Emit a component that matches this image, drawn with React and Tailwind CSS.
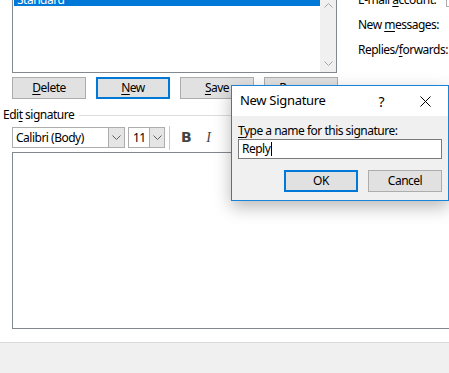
import React from 'react';

const U = ({ children }) => <span className="underline underline-offset-2">{children}</span>;

const Chevron = ({ className = '' }) => (
  <svg width="9" height="6" viewBox="0 0 9 6" className={className}>
    <path d="M0.5 0.5 L4.5 4.5 L8.5 0.5" fill="none" stroke="currentColor" strokeWidth="1" />
  </svg>
);

const WinButton = ({ children, focused }) => (
  <div
    className={
      'w-[74px] h-[22px] flex items-center justify-center bg-[#e1e1e1] ' +
      (focused ? 'border-2 border-[#0078d7]' : 'border border-[#adadad]')
    }
  >
    {children}
  </div>
);

export default function App() {
  return (
    <div
      className="relative w-[449px] h-[373px] overflow-hidden bg-white text-[12px] tracking-[-0.5px] text-black flex flex-col"
      style={{ fontFamily: '"Noto Sans", "Open Sans", sans-serif' }}
    >
      {/* list + account settings */}
      <div className="flex -mt-[14px] h-[87px] shrink-0">
        <div className="ml-[12px] w-[325px] h-[87px] border-x border-b border-[#828790] flex">
          <div className="flex-1 pl-[1px]">
            <div className="h-[20px] overflow-hidden bg-[#0078d7] text-white pl-[3px] leading-[27px]">Standard</div>
          </div>
          <div className="w-[16px] bg-[#f0f0f0] flex flex-col justify-between items-center pt-[16px] pb-[5px] text-[#a6a6a6]">
            <Chevron className="rotate-180" />
            <Chevron />
          </div>
        </div>
        <div className="ml-[21px] flex flex-col pt-[5px] gap-[7px] leading-[18px] flex-1 min-w-0">
          <div className="flex">
            <span className="whitespace-nowrap">E-mail <U>a</U>ccount:</span>
            <div className="ml-auto w-[3px] h-[21px] -mt-[5px] border-l border-b border-[#adadad]" />
          </div>
          <div className="whitespace-nowrap">New <U>m</U>essages:</div>
          <div className="whitespace-nowrap">Replies/<U>f</U>orwards:</div>
        </div>
      </div>

      {/* list buttons */}
      <div className="flex gap-[10px] ml-[12px] mt-[4px] shrink-0">
        <WinButton><span><U>D</U>elete</span></WinButton>
        <WinButton focused><span><U>N</U>ew</span></WinButton>
        <WinButton><span><U>S</U>ave</span></WinButton>
        <WinButton><span><U>R</U>ename</span></WinButton>
      </div>

      {/* edit signature group */}
      <div className="flex items-center ml-[3px] mt-[8px] h-[16px] shrink-0">
        <span className="whitespace-nowrap">Edi<U>t</U> signature</span>
        <div className="flex-1 h-px bg-[#dcdcdc] ml-[5px]" />
      </div>

      {/* toolbar */}
      <div className="flex items-center ml-[12px] mt-[4px] h-[21px] shrink-0">
        <div className="w-[113px] h-[21px] border border-[#adadad] flex">
          <div className="flex-1 pl-[3px] leading-[19px]">Calibri (Body)</div>
          <div className="w-[16px] bg-[#e5e5e5] border-l border-[#adadad] flex items-center justify-center text-[#606060]">
            <Chevron />
          </div>
        </div>
        <div className="ml-[3px] w-[37px] h-[21px] border border-[#adadad] flex">
          <div className="flex-1 pl-[4px] leading-[19px]">11</div>
          <div className="w-[15px] bg-[#e5e5e5] border-l border-[#adadad] flex items-center justify-center text-[#606060]">
            <Chevron />
          </div>
        </div>
        <div className="ml-[4px] w-px h-[24px] bg-[#c8c8c8]" />
        <span className="ml-[11px] font-bold text-[14px] text-[#444]" style={{ fontFamily: '"DejaVu Sans", sans-serif' }}>B</span>
        <span className="ml-[15px] italic text-[14px] text-[#444]" style={{ fontFamily: '"Liberation Serif", serif' }}>I</span>
      </div>

      {/* edit area */}
      <div className="ml-[12px] mt-[4px] h-[177px] w-[450px] border border-[#828790] bg-white shrink-0" />

      {/* bottom strip */}
      <div className="mt-[13px] flex-1 bg-[#f0f0f0] border-t border-[#d9d9d9]" />

      {/* New Signature dialog */}
      <div className="absolute left-[231px] top-[85px] w-[218px] h-[116px] border border-[#1883d7] bg-[#f0f0f0] shadow-[0_6px_16px_rgba(0,0,0,0.28)] flex flex-col">
        <div className="h-[30px] bg-white flex items-center pl-[8px] shrink-0">
          <span className="flex-1 text-[13px] tracking-[-0.3px]">New Signature</span>
          <span className="text-[14px] mr-[36px]">?</span>
          <svg width="11" height="11" viewBox="0 0 11 11" className="mr-[17px]">
            <path d="M0.5 0.5 L10.5 10.5 M10.5 0.5 L0.5 10.5" stroke="#000" strokeWidth="1" />
          </svg>
        </div>
        <div className="pl-[6px] pt-[6px] leading-[17px]">
          <U>T</U>ype a name for this signature:
        </div>
        <div className="ml-[6px] w-[204px] h-[20px] border border-[#7a7a7a] bg-white flex items-center pl-[3px]">
          <span>Reply</span>
          <span className="w-px h-[14px] bg-black ml-[1px]" />
        </div>
        <div className="flex justify-end gap-[10px] mt-[11px] mr-[6px]">
          <WinButton focused>OK</WinButton>
          <WinButton>Cancel</WinButton>
        </div>
      </div>
    </div>
  );
}
